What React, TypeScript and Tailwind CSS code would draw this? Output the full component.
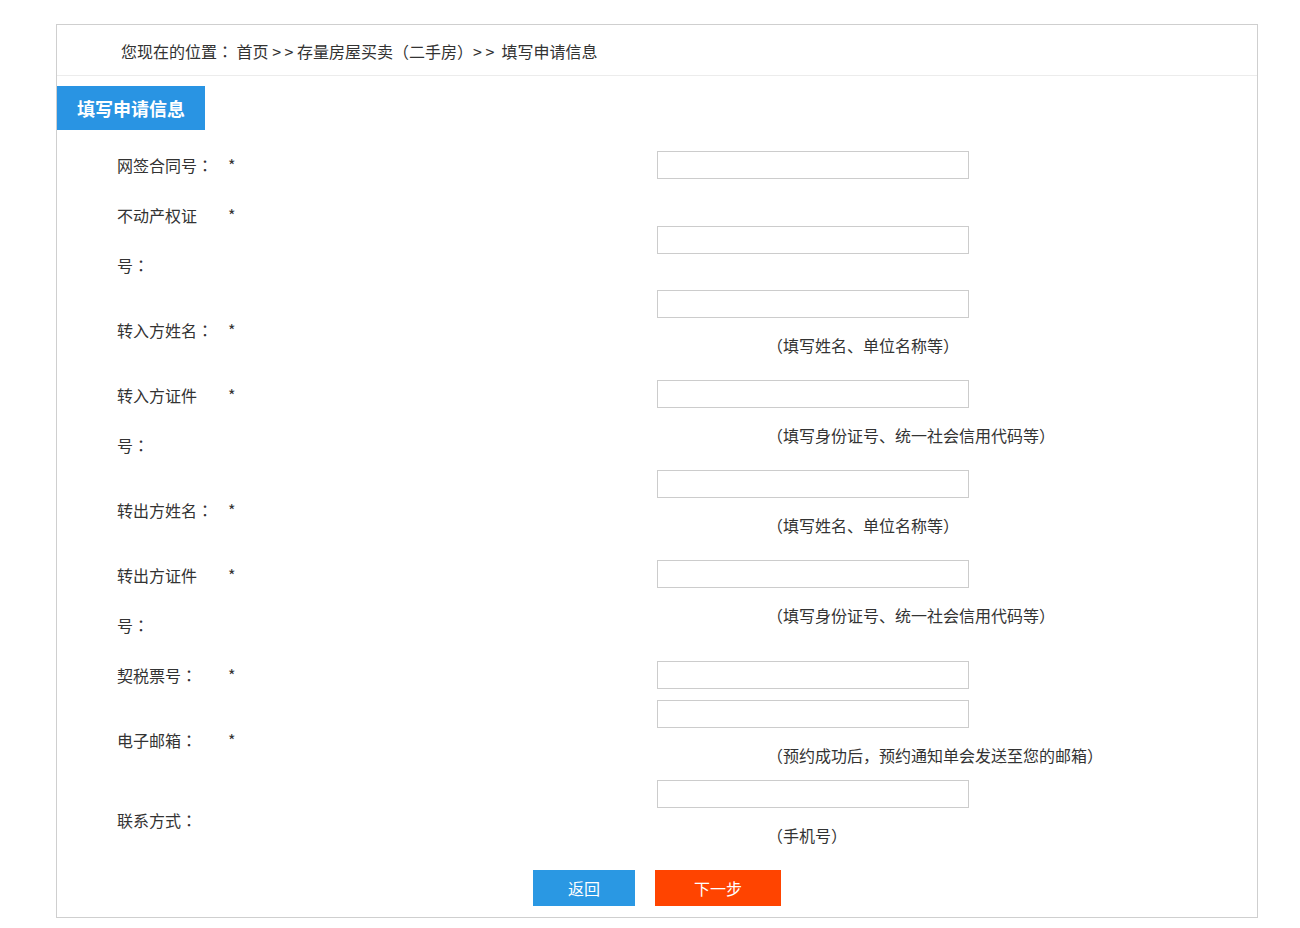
import React from 'react';

const font = "font-['Microsoft_YaHei','Noto_Sans_CJK_SC',sans-serif]";
const jp = "font-['Noto_Sans_CJK_JP',sans-serif]";

// fullwidth parens and colon are centred in the original font, so draw them with the JP face
function T({ s }: { s: string }) {
  return (
    <>
      {s.split(/([（）：])/).map((p, i) =>
        /^[（）：]$/.test(p) ? (
          <span key={i} className={jp}>{p}</span>
        ) : (
          <React.Fragment key={i}>{p}</React.Fragment>
        )
      )}
    </>
  );
}

function Label({ s }: { s: string }) {
  const head = s.slice(0, -2);
  const last = s.slice(-2, -1);
  return (
    <>
      {head}
      <span className="whitespace-nowrap">
        {last}
        <span className={jp}>：</span>
      </span>
    </>
  );
}

const rows = [
  { label: '网签合同号：', req: true },
  { label: '不动产权证号：', req: true },
  { label: '转入方姓名：', req: true, hint: '（填写姓名、单位名称等）' },
  { label: '转入方证件号：', req: true, hint: '（填写身份证号、统一社会信用代码等）' },
  { label: '转出方姓名：', req: true, hint: '（填写姓名、单位名称等）' },
  { label: '转出方证件号：', req: true, hint: '（填写身份证号、统一社会信用代码等）' },
  { label: '契税票号：', req: true },
  { label: '电子邮箱：', req: true, hint: '（预约成功后，预约通知单会发送至您的邮箱）' },
  { label: '联系方式：', req: false, hint: '（手机号）' },
];

export default function App() {
  return (
    <div className={`min-h-screen bg-white text-[16px] text-[#333] ${font}`}>
      <div className="pt-[24px] pl-[56px]">
        <div className="w-[1202px] border border-[#cfcfcf] pb-[11px]">
          <div className="h-[51px] border-b border-[#ececec] pl-[64px] leading-[52px] whitespace-nowrap">
            您现在的位置<T s="：" /> 首页 <span className="tracking-[3.5px]">&gt;&gt;</span>存量房屋买卖<T s="（二手房）" />
            <span className="tracking-[3.5px]">&gt;&gt;</span> 填写申请信息
          </div>

          <div className="mt-[10px] w-[148px] h-[44px] bg-[#2994e3] text-center text-[18px] font-bold leading-[44px] text-white">
            填写申请信息
          </div>

          <div className="mt-[10px]">
            {rows.map((r, i) => (
              <div key={i} className="flex items-center">
                <div className="w-[600px] pl-[60px] flex items-start">
                  <span className="w-[100px] leading-[50px]"><Label s={r.label} /></span>
                  {r.req && <span className="ml-[11px] leading-[50px]">*</span>}
                </div>
                <div className="flex flex-col">
                  <input className="w-[312px] h-[28px] border border-[#cccccc] bg-white outline-none px-1" />
                  {r.hint && (
                    <div className="mt-[2px] pl-[110px] leading-[50px]"><T s={r.hint} /></div>
                  )}
                </div>
              </div>
            ))}
          </div>

          <div className="mt-[10px] flex justify-center gap-[20px]">
            <button className="w-[102px] h-[36px] bg-[#2a98e3] text-white text-[16px]">返回</button>
            <button className="w-[126px] h-[36px] bg-[#ff4400] text-white text-[16px]">下一步</button>
          </div>
        </div>
      </div>
    </div>
  );
}
